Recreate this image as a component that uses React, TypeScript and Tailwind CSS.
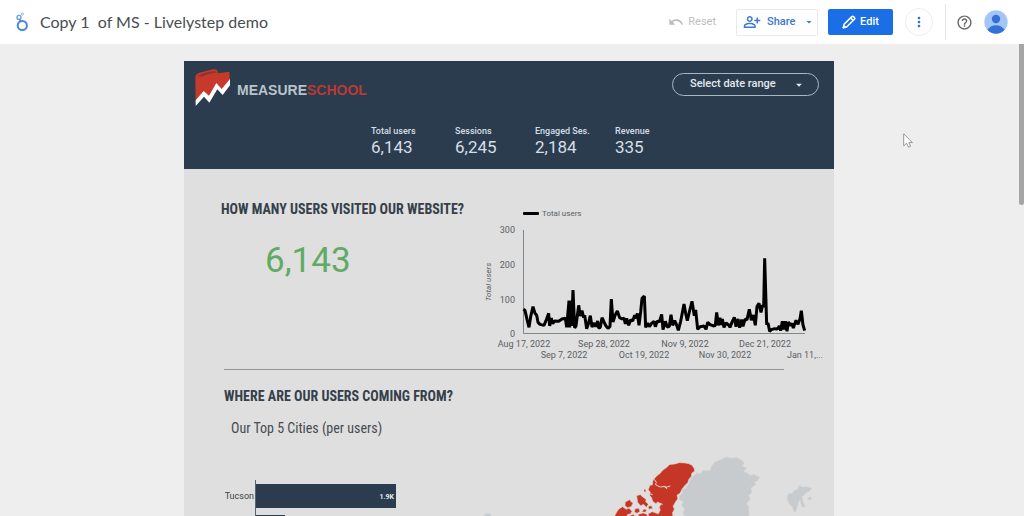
import React from 'react';
import {
  MdArrowDropDown,
  MdHelpOutline,
  MdMoreVert,
  MdOutlinePersonAddAlt,
  MdUndo,
} from 'react-icons/md';

interface Metric {
  label: string;
  value: string;
}

const metrics: Metric[] = [
  { label: 'Total users', value: '6,143' },
  { label: 'Sessions', value: '6,245' },
  { label: 'Engaged Ses.', value: '2,184' },
  { label: 'Revenue', value: '335' },
];

const yTicks = [
  { label: '300', y: 29 },
  { label: '200', y: 64 },
  { label: '100', y: 99 },
  { label: '0', y: 133 },
];

const xTicks = [
  { label: 'Aug 17, 2022', x: 44, y: 146 },
  { label: 'Sep 7, 2022', x: 84, y: 157 },
  { label: 'Sep 28, 2022', x: 124, y: 146 },
  { label: 'Oct 19, 2022', x: 164, y: 157 },
  { label: 'Nov 9, 2022', x: 205, y: 146 },
  { label: 'Nov 30, 2022', x: 245, y: 157 },
  { label: 'Dec 21, 2022', x: 285, y: 146 },
  { label: 'Jan 11,...', x: 325, y: 157 },
];

const usersLine =
  '10,178 15,181 21,208 27,232 32,200 39,170 45,190 50,196 54,217 60,223 72,226 78,212 86,190 89,228 94,204 98,221 104,213 116,214 126,207 136,205 140,232 147,152 149,232 153,152 155,228 159,120 164,234 168,228 176,166 181,198 186,182 191,203 194,196 200,236 205,222 211,197 216,231 223,219 227,230 233,213 236,234 241,232 246,203 252,216 258,228 264,235 270,229 274,147 279,216 286,194 292,183 299,203 306,207 312,204 316,222 320,205 326,226 332,209 338,213 344,196 348,205 352,190 357,226 362,186 366,145 373,138 377,232 383,219 388,230 394,221 402,214 406,230 412,213 418,216 425,193 429,239 436,214 442,231 448,229 453,194 458,226 464,212 470,225 475,241 482,214 487,188 492,162 497,190 502,212 508,186 516,154 523,197 527,180 533,238 540,230 552,228 558,238 563,217 570,224 582,228 586,226 590,187 595,226 600,203 604,225 607,207 612,232 618,219 626,225 630,232 637,214 643,202 648,230 654,207 659,233 665,209 669,229 675,208 681,209 688,178 694,211 700,195 706,226 711,169 717,160 723,187 728,165 731,172 734,25 740,224 744,219 749,244 754,239 764,236 772,237 778,228 782,242 787,214 791,238 796,214 801,244 805,216 812,227 816,220 820,234 828,211 834,223 840,206 844,182 849,225 854,242';

const LookerLogo = () => (
  <svg viewBox="0 0 16 22" className="h-[22px] w-4" fill="none" aria-hidden="true">
    <circle cx="8.3" cy="14.5" r="4.6" stroke="#4a86dc" strokeWidth="2" />
    <circle cx="5" cy="6.4" r="2" stroke="#6f9fe0" strokeWidth="1.4" />
    <circle cx="8.3" cy="3" r="1.1" stroke="#8fb3e6" strokeWidth="1" />
    <path d="M5.8 8.4 6.6 10.4" stroke="#4a86dc" strokeWidth="1.6" />
  </svg>
);

const PencilIcon = () => (
  <svg viewBox="0 0 14 14" className="size-3.5" fill="none" stroke="white" aria-hidden="true">
    <path d="M1.3 12.7 2 9.4 9.8 1.6Q10.6.8 11.5 1.6L12.4 2.5Q13.2 3.4 12.4 4.2L4.6 12Z" strokeWidth="1.5" strokeLinejoin="round" />
    <path d="M8.6 2.9 11.1 5.4" strokeWidth="1.5" />
    <path d="M1 13 1.8 10.2 3.8 12.2Z" fill="white" strokeWidth="1" />
  </svg>
);

const Avatar = () => (
  <svg viewBox="0 0 24 24" className="size-6" aria-hidden="true">
    <defs>
      <clipPath id="avatar-clip">
        <circle cx="12" cy="12" r="11.7" />
      </clipPath>
    </defs>
    <g clipPath="url(#avatar-clip)">
      <rect width="24" height="24" fill="#a3c5f8" />
      <circle cx="12" cy="9" r="4.2" fill="#3371d4" />
      <path d="M3.5 19.5Q7 15.2 12 15.2T20.5 19.5L18 24H6Z" fill="#3371d4" />
    </g>
  </svg>
);

const SchoolLogo = () => (
  <svg viewBox="0 0 108 114" className="h-[38px] w-9" aria-hidden="true">
    <path d="M1 27Q0 17 10 12L54 1Q66-1 68 7L70 13 103 8 105 35 81 69 61 50 40 83 22 75 2 104Z" fill="#c73a2b" />
    <path d="M8 21Q30 9 59 7L70 10Q43 12 21 23Z" fill="#853334" />
    <path d="M2 111V94L26 66 42 80 64 42 80 60 105 30V49L83 78 67 61 43 101 27 83Z" fill="white" />
  </svg>
);

const TopBar = () => (
  <header className="flex h-11 shrink-0 items-center bg-white pr-4 pl-3.5">
    <LookerLogo />
    <h1 className="ml-2.5 whitespace-pre font-['Lato','Roboto',sans-serif] text-base text-[#4a4d51]">
      Copy 1  of MS - Livelystep demo
    </h1>
    <div className="ml-auto flex items-center font-['Roboto',sans-serif] text-[11px] font-medium">
      <button type="button" disabled className="mr-5 flex items-center gap-1 font-normal text-[#bdbdbd]">
        <MdUndo size={16} />
        Reset
      </button>
      <div className="flex h-[27px] w-[82px] items-center rounded-xs border border-[#e8eaee] text-[#3c78d0]">
        <button type="button" className="flex flex-1 items-center gap-1.5 pl-1.5">
          <MdOutlinePersonAddAlt size={18} />
          Share
        </button>
        <button type="button" aria-label="More share options" className="flex h-full w-4 items-center justify-center">
          <MdArrowDropDown size={12} />
        </button>
      </div>
      <button type="button" className="ml-2.5 flex h-[26px] w-[65px] items-center justify-center gap-1 rounded-xs bg-[#1b6fe6] text-white">
        <PencilIcon />
        Edit
      </button>
      <button type="button" aria-label="More options" className="ml-3 flex size-7 items-center justify-center rounded-full border border-[#eceef1] text-[#2f6fd0]">
        <MdMoreVert size={16} />
      </button>
      <div className="ml-3 h-9 border-l border-[#e6e6e6]" />
      <button type="button" aria-label="Help" className="ml-2.5 text-[#666666]">
        <MdHelpOutline size={17} />
      </button>
      <button type="button" aria-label="Account" className="ml-[11px]">
        <Avatar />
      </button>
    </div>
  </header>
);

const ReportHeader = () => (
  <div className="h-[108px] bg-[#2b3c4e] pr-[15px] pl-[11px] text-[#d5dfe6]">
    <div className="flex items-start justify-between">
      <div className="flex items-center gap-1.5 pt-2">
        <SchoolLogo />
        <p className="pt-1 font-['Liberation_Sans',sans-serif] text-sm font-bold text-[#b9c3cb]">
          MEASURE<span className="text-[#b93a34]">SCHOOL</span>
        </p>
      </div>
      <button type="button" className="mt-3 flex h-[23px] w-[147px] items-center justify-between rounded-full border border-[#a9b7c2] pr-3 pl-[17px] text-[11px] font-medium text-[#e4ebf0]">
        Select date range
        <MdArrowDropDown size={14} />
      </button>
    </div>
    <dl className="mt-4 grid grid-cols-[84px_80px_80px_auto] pl-44">
      {metrics.map((metric) => (
        <div key={metric.label}>
          <dt className="text-[9px] leading-4 font-medium">{metric.label}</dt>
          <dd className="text-[17px] leading-4">{metric.value}</dd>
        </div>
      ))}
    </dl>
  </div>
);

const UsersChart = () => (
  <svg viewBox="0 0 354 168" className="h-[168px] w-[354px] shrink-0" role="img" aria-label="Total users over time">
    <rect x="43" y="11" width="16" height="3" rx="1" fill="black" />
    <g fill="#5b6064" className="text-[8px]">
      <text x="62" y="15">Total users</text>
      <text x="11" y="81" textAnchor="middle" fontStyle="italic" transform="rotate(-90 11 81)">Total users</text>
    </g>
    <g fill="#5b6064" className="text-[9px]">
      {yTicks.map((tick) => (
        <text key={tick.label} x="35" y={tick.y + 3} textAnchor="end">{tick.label}</text>
      ))}
      {xTicks.map((tick) => (
        <text key={tick.label} x={tick.x} y={tick.y} textAnchor="middle">{tick.label}</text>
      ))}
    </g>
    <path d="M43.5 29V132.5H325" fill="none" stroke="#7d878c" />
    <svg x="40" y="49" width="290" height="90" viewBox="0 0 870 270">
      <polyline points={usersLine} fill="none" stroke="black" strokeWidth="9" strokeLinejoin="bevel" />
    </svg>
  </svg>
);

const CitiesChart = () => (
  <svg viewBox="0 0 256 72" className="h-[72px] w-64 shrink-0" role="img" aria-label="Top cities by users">
    <path d="M37.5 35V72" stroke="#5a646b" />
    <rect x="38" y="39" width="140" height="24" fill="#2b3c4e" />
    <rect x="38" y="70" width="29" height="2" fill="#2b3c4e" />
    <text x="36" y="54" textAnchor="end" fill="#3c4246" className="text-[9px]">Tucson</text>
    <text x="176" y="54" textAnchor="end" fill="#e6edf1" className="text-[7px] font-bold">1.9K</text>
  </svg>
);

const UsersMap = () => (
  <svg viewBox="-378 0 1080 216" className="h-[72px] w-[360px] shrink-0" role="img" aria-label="Users by country">
    {/* Greenland, Svalbard and the tip of Siberia */}
    <g fill="#c8cbcd" stroke="#d4d6d7" strokeWidth="2" strokeLinejoin="round">
      <path d="M238 153 248 143 244 134 257 130 266 117 272 100 290 84 301 86 309 76 330 77 334 64 345 50 366 42 377 36 393 39 410 37 425 45 433 55 426 62 439 69 431 80 444 85 449 91 462 88 480 98 472 107 464 111 467 120 453 129 455 143 446 151 451 163 439 176 446 184 448 216H255L248 204 254 191 244 182 250 171 239 164Z" />
      <path d="M561 153 567 145 576 146 582 137 592 133 599 120 607 126 621 125 635 130 629 139 617 144 613 150 606 154 609 170 616 184 609 188 603 178 600 165 596 170 589 198 582 202 577 185 569 179 563 166Z" />
      <path d="M621 160 632 155 635 162 628 165Z" />
      <path d="M-352 216-344 206-333 205-326 211-322 216Z" />
    </g>
    {/* Canada */}
    <g fill="#c53627" stroke="#e2cdbd" strokeWidth="1.5" strokeLinejoin="round">
      <path d="M163 101 171 92 181 85 188 76 201 67 208 59 225 57 238 53 254 54 266 56 276 61 282 70 284 78 275 85 274 94 267 102 263 113 254 122 246 132 240 145 231 150 233 161 225 173 219 184 223 193 217 204 219 216H148L144 207 157 200 175 207 181 195 178 187 184 176 172 171 168 176 158 169 155 158 149 151 151 142 145 134 150 121 157 120 159 107Z" />
      <path d="M110 152 121 149 128 156 138 163 137 170 145 178 139 187 131 178 122 182 113 172Z" />
      <path d="M76 171 89 164 94 171 99 175 93 185 83 188 75 182Z" />
      <path d="M45 211 52 198 58 191 68 185 78 193 87 190 96 199 91 207 83 208 79 216H44Z" />
      <path d="M106 191 116 190 120 199 111 205 103 201Z" />
      <path d="M131 136 135 132 138 138 135 142Z" />
      <path d="M145 184 154 182 158 190 147 193Z" />
      <path d="M116 208 130 204 142 209 141 216H114Z" />
      <path d="M132 192 140 195 136 202 126 200Z" />
      <path d="M90 212 101 208 105 216H89Z" />
    </g>
    <path d="M163 103 169 112 166 119 181 126 196 124 201 132M194 128 211 123M147 146 158 149M171 174 188 178" fill="none" stroke="#e8d4c6" strokeWidth="3" />
  </svg>
);

const headingClass =
  "font-['Roboto_Condensed','Liberation_Sans_Narrow','Roboto',sans-serif] text-[14px] leading-4 font-bold text-[#35404a]";

export default function App() {
  return (
    <div className="relative flex h-screen flex-col overflow-hidden bg-[#eeeeee] font-['Roboto',sans-serif]">
      <TopBar />
      <div className="flex min-h-0 flex-1 overflow-hidden">
        <main className="flex-1 pt-[17px]">
          <article className="mx-auto min-h-full max-w-[650px] bg-[#dfdfdf]">
            <ReportHeader />
            <section className="flex justify-between pt-8">
              <div className="pl-[37px]">
                <h2 className={`${headingClass} whitespace-nowrap`}>
                  HOW MANY USERS VISITED OUR WEBSITE?
                </h2>
                <p className="pt-6 pl-11 text-[35px] leading-10 text-[#5fab63]">6,143</p>
              </div>
              <div className="-ml-10">
                <UsersChart />
              </div>
            </section>
            <hr className="mr-[50px] ml-10 border-t border-[#8f979b]" />
            <section className="pt-[18px]">
              <h2 className={`${headingClass} pl-10`}>WHERE ARE OUR USERS COMING FROM?</h2>
              <h3 className="pt-3.5 pl-[47px] font-['Roboto_Condensed','Liberation_Sans_Narrow','Roboto',sans-serif] text-[14px] leading-5 text-[#454c51]">
                Our Top 5 Cities (per users)
              </h3>
              <div className="flex justify-between pt-[7px] pl-[34px]">
                <CitiesChart />
                <UsersMap />
              </div>
            </section>
          </article>
        </main>
        <div className="w-1.5 shrink-0 pl-px">
          <div className="h-[161px] rounded-b-sm bg-[#a5a5a5]" />
        </div>
      </div>
      <svg viewBox="0 0 10 15" className="absolute top-[133px] left-[903px] h-[15px] w-2.5" aria-hidden="true">
        <path d="M.7.8V12.8L3.6 10.2 5.6 14.2 7.6 13.2 5.8 9.6H9.4Z" fill="white" stroke="#8b8b8b" strokeWidth=".9" />
      </svg>
    </div>
  );
}
